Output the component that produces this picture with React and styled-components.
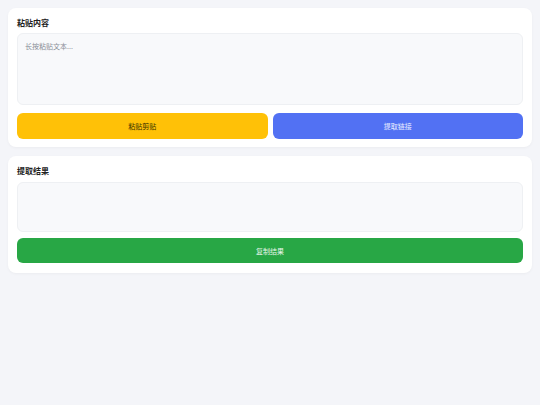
import React from "react";
import styled, { createGlobalStyle } from "styled-components";

const Global = createGlobalStyle`
  html, body { margin: 0; padding: 0; background: #f4f5f9; }
  body { font-family: "Noto Sans CJK SC", "Noto Sans", sans-serif; }
  * { box-sizing: border-box; }
`;

const Page = styled.div`
  display: flex;
  flex-direction: column;
  gap: 9px;
  padding: 8px;
  min-height: 405px;
  background: #f4f5f9;
`;

const Card = styled.section`
  background: #ffffff;
  border-radius: 8px;
  padding: 9px 9px ${(p) => p.$pb}px;
  box-shadow: 0 1px 3px rgba(0, 0, 0, 0.04);
  display: flex;
  flex-direction: column;
`;

const Title = styled.h2`
  margin: 0;
  font-size: 8px;
  line-height: 12px;
  font-weight: 700;
  color: #222;
  height: ${(p) => p.$h}px;
`;

const Area = styled.div`
  height: ${(p) => p.$h}px;
  background: #f8f9fb;
  border: 1px solid #eef0f3;
  border-radius: 6px;
  padding: 6px 7px;
  font-size: 7px;
  line-height: 12px;
  color: #8a8f98;
`;

const Row = styled.div`
  display: flex;
  gap: 5px;
  margin-top: ${(p) => p.$mt}px;
`;

const Button = styled.button`
  flex: 1;
  height: ${(p) => p.$h}px;
  border: none;
  border-radius: 6px;
  background: ${(p) => p.$bg};
  color: ${(p) => p.$fg};
  font-family: inherit;
  font-size: 7px;
  cursor: pointer;
`;

export default function App() {
  return (
    <>
      <Global />
      <Page>
        <Card $pb={8}>
          <Title $h={16}>粘贴内容</Title>
          <Area $h={72}>长按粘贴文本...</Area>
          <Row $mt={8}>
            <Button $h={26} $bg="#ffc107" $fg="#3a2e00">粘贴剪贴</Button>
            <Button $h={26} $bg="#5271f3" $fg="#e8ecff">提取链接</Button>
          </Row>
        </Card>
        <Card $pb={10}>
          <Title $h={17}>提取结果</Title>
          <Area $h={50} />
          <Row $mt={6}>
            <Button $h={25} $bg="#28a745" $fg="#e6f6ea">复制结果</Button>
          </Row>
        </Card>
      </Page>
    </>
  );
}
